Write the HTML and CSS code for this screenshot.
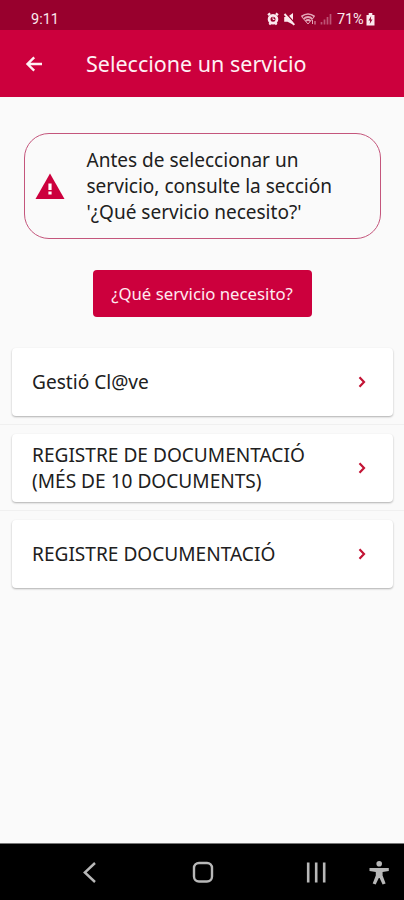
FILE: index.html
```html
<!DOCTYPE html>
<html lang="es">
<head>
<meta charset="utf-8">
<title>Seleccione un servicio</title>
<link rel="stylesheet" href="styles.css">
</head>
<body>
<div class="status">
  <span class="time">9:11</span>
  <svg class="status-icons" width="66" height="14" viewBox="0 0 66 14">
    <g fill="none" stroke="#fbe9ee">
      <circle cx="6" cy="7.200" r="3.900" stroke-width="2.800"/>
      <path d="M1 3.200 3.200 1.400M11 3.200 8.800 1.400M2.300 12.500 3.600 11.200M9.700 12.500 8.400 11.200" stroke-width="2.200"/>
      <path d="M6 5.200V7.500H7.600" stroke-width="1"/>
    </g>
    <path fill="#fbe9ee" d="M17.200 5H20.500L26 1V12.500L20.500 9.800H17.200Z"/>
    <path d="M19 1.500 28.500 12" stroke="#98002d" stroke-width="1.400"/>
    <path d="M17.500 2 27.300 12.800" stroke="#fbe9ee" stroke-width="1.900"/>
    <g fill="none" stroke="#e4a6b8" stroke-width="1.700">
      <path d="M34.500 4.500Q41 -.5 47.500 4.500M36.500 6.800Q41 3.200 45.500 6.800M38.500 9Q41 7 43.500 9"/>
      <path d="M34.500 4.500 41 12 47.500 4.500" stroke-width="1"/>
      <path d="M45.500 12V8M48 9V12.500" stroke-width="1"/>
    </g>
    <path d="M54.500 12.500V10M57.500 12.500V7.500M60.500 12.500V5M63.500 12.500V2" stroke="#bd5475" stroke-width="1.700"/>
  </svg>
  <span class="percent">71%</span>
  <svg class="battery" width="9" height="13" viewBox="0 0 9 13">
    <path fill="#fbe9ee" d="M2.700 0H6.300V2H8.500V12.500H.5V2H2.700Z"/>
    <path fill="#98002d" d="M5.200 3 2.500 7.500H4.200L3.700 11 6.500 6.500H4.800Z"/>
  </svg>
</div>
<header class="appbar">
  <svg class="back" width="18" height="18" viewBox="0 0 18 18"><path d="M17 9H2.500M9.200 2.300 2.500 9 9.200 15.700" fill="none" stroke="#fff0f4" stroke-width="2.400"/></svg>
  <h1>Seleccione un servicio</h1>
</header>
<main>
  <section class="notice">
    <svg class="warn" width="30" height="26" viewBox="0 0 30 26"><path fill="#cc003d" d="M15 .5 29.500 26H.5Z"/><path fill="#fff" d="M13.400 10.500H16.600V17H13.400ZM13.400 18.600H16.600V21.600H13.400Z"/></svg>
    <p>Antes de seleccionar un<br>servicio, consulte la sección<br>'¿Qué servicio necesito?'</p>
  </section>
  <button class="help">¿Qué servicio necesito?</button>
  <ul class="services">
    <li><a class="card"><span>Gestió Cl@ve</span><svg class="chev" width="8" height="12" viewBox="0 0 8 12"><path d="M1.500 1.300 6 6 1.500 10.700"/></svg></a></li>
    <li><a class="card"><span>REGISTRE DE DOCUMENTACIÓ<br>(MÉS DE 10 DOCUMENTS)</span><svg class="chev" width="8" height="12" viewBox="0 0 8 12"><path d="M1.500 1.300 6 6 1.500 10.700"/></svg></a></li>
    <li><a class="card"><span>REGISTRE DOCUMENTACIÓ</span><svg class="chev" width="8" height="12" viewBox="0 0 8 12"><path d="M1.500 1.300 6 6 1.500 10.700"/></svg></a></li>
  </ul>
</main>
<nav class="navbar">
  <svg width="404" height="56" viewBox="0 0 404 56" fill="none" stroke="#b8b8b8" stroke-width="2.400">
    <path d="M95 19 84.800 28.500 95 38"/>
    <rect x="194" y="19" width="18" height="18.500" rx="5"/>
    <path d="M308.200 18.500V38.500M316.200 18.500V38.500M324.200 18.500V38.500" stroke-width="2.600"/>
    <g fill="#b8b8b8" stroke="none"><circle cx="379.200" cy="19.800" r="2.800"/><path d="M369.500 24H388.800V27L382.600 28V31.500L385.600 39.500 382.600 40.500 379.600 34H378.800L375.700 40.500 372.700 39.500 375.800 31.500V28L369.500 27Z"/></g>
  </svg>
</nav>
</body>
</html>
```
FILE: styles.css
```css
* { box-sizing: border-box; }
body {
  margin: 0;
  width: 404px;
  height: 900px;
  display: flex;
  flex-direction: column;
  background: #fafafa;
  font-family: "Noto Sans", sans-serif;
  color: #202020;
  overflow: hidden;
}
.status {
  height: 30px;
  flex: none;
  display: flex;
  align-items: center;
  padding: 8px 29px 0 31px;
  background: #98002d;
  color: #fbe9ee;
  font: 14.5px/20px Roboto, sans-serif;
}
.time { flex: 1; padding-top: 1px; }
.status-icons { margin-right: 4px; }
.percent { width: 28px; padding-top: 1px; letter-spacing: -.1px; white-space: nowrap; }
.battery { margin-left: 1px; }
.appbar {
  height: 67px;
  flex: none;
  display: flex;
  align-items: center;
  padding-left: 25px;
  background: #cc003d;
  color: #fff0f4;
}
.back { margin-right: 43px; }
h1 { margin: 0; font-size: 21.5px; font-weight: 400; line-height: 28px; white-space: nowrap; }
main {
  flex: 1;
  display: flex;
  flex-direction: column;
  align-items: center;
  padding-top: 36px;
}
.notice {
  width: 357px;
  height: 106px;
  display: flex;
  align-items: center;
  padding-left: 10px;
  border: 1.5px solid #c4567c;
  border-radius: 25px;
}
.warn { margin-right: 22px; }
.notice p { margin: 0; font-size: 19.05px; line-height: 26px; white-space: nowrap; }
.help {
  width: 219px;
  height: 47px;
  margin: 31px 0 0;
  padding: 0;
  border: 0;
  border-radius: 4px;
  background: #cc003d;
  color: #ffeaf0;
  font: 16.75px/24px "Noto Sans", sans-serif;
  white-space: nowrap;
}
.services { width: 100%; margin: 22px 0 0; padding: 0; list-style: none; }
.services li { height: 86px; padding: 9px 11px 9px 12px; border-bottom: 1px solid #f0f0f0; }
.services li:last-child { border-bottom: 0; }
.card {
  height: 68px;
  display: flex;
  align-items: center;
  justify-content: space-between;
  padding: 0 27px 0 20px;
  border-radius: 4px;
  background: #fff;
  box-shadow: 0 1px 2px rgba(0, 0, 0, .3);
  font-size: 19.1px;
  line-height: 26px;
  white-space: nowrap;
}
.chev path { fill: none; stroke: #c31435; stroke-width: 2.2; }
.navbar { height: 57px; flex: none; border-top: 1px solid #777; background: #000; }
.navbar svg { display: block; }
```
